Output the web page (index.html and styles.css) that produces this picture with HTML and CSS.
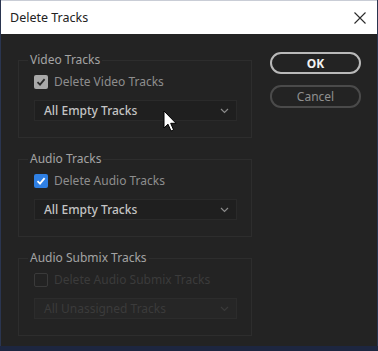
FILE: index.html
```html
<!doctype html>
<html lang="en">
  <head>
    <meta charset="UTF-8" />
    <title>Delete Tracks</title>
    <link rel="stylesheet" href="styles.css">
  </head>
  <body>
    <div class="window">
      <div class="titlebar">
        <span class="title">Delete Tracks</span>
        <svg class="close" width="12" height="12" viewBox="0 0 12 12">
          <path d="M0.5 0.5 L11.5 11.5 M11.5 0.5 L0.5 11.5" stroke="#2b2b2b" stroke-width="1.1" />
        </svg>
      </div>
      <div class="content">
        <div class="groups">
          <fieldset class="group">
            <legend>Video Tracks</legend>
            <label class="check-row">
              <span class="box box-gray">
                <svg width="10" height="10" viewBox="0 0 10 10">
                  <path d="M1.5 5.2 L4 7.6 L8.6 2.2" fill="none" stroke="#2a2a2a" stroke-width="1.8" />
                </svg>
              </span>
              Delete Video Tracks
            </label>
            <div class="select">
              <span>All Empty Tracks</span>
              <svg width="9" height="6" viewBox="0 0 9 6">
                <path d="M1 1 L4.5 4.5 L8 1" fill="none" stroke="#8a8a8a" stroke-width="1.2" />
              </svg>
            </div>
          </fieldset>

          <fieldset class="group">
            <legend>Audio Tracks</legend>
            <label class="check-row">
              <span class="box box-blue">
                <svg width="10" height="10" viewBox="0 0 10 10">
                  <path d="M1.5 5.2 L4 7.6 L8.6 2.2" fill="none" stroke="#ffffff" stroke-width="1.8" />
                </svg>
              </span>
              Delete Audio Tracks
            </label>
            <div class="select">
              <span>All Empty Tracks</span>
              <svg width="9" height="6" viewBox="0 0 9 6">
                <path d="M1 1 L4.5 4.5 L8 1" fill="none" stroke="#8a8a8a" stroke-width="1.2" />
              </svg>
            </div>
          </fieldset>

          <fieldset class="group">
            <legend>Audio Submix Tracks</legend>
            <label class="check-row disabled">
              <span class="box box-off"></span>
              Delete Audio Submix Tracks
            </label>
            <div class="select disabled">
              <span>All Unassigned Tracks</span>
              <svg width="9" height="6" viewBox="0 0 9 6">
                <path d="M1 1 L4.5 4.5 L8 1" fill="none" stroke="#3a3a3a" stroke-width="1.2" />
              </svg>
            </div>
          </fieldset>
        </div>

        <div class="buttons">
          <button class="btn btn-ok">OK</button>
          <button class="btn btn-cancel">Cancel</button>
        </div>
      </div>
    </div>

    <svg class="cursor" width="14" height="23" viewBox="0 0 14 23">
      <path d="M1 1 L1 18 L5 14.2 L8 21 L10.6 19.9 L7.7 13.3 L13 13.3 Z" fill="#ffffff" stroke="#000000" stroke-width="1" stroke-linejoin="round" />
    </svg>
  </body>
</html>
```

FILE: styles.css
```css
html,
body {
  margin: 0;
  padding: 0;
}
body {
  width: 378px;
  height: 351px;
  background-color: #1d2640;
  font-family: "Noto Sans", "Open Sans", sans-serif;
  position: relative;
  overflow: hidden;
}
.window {
  width: 376px;
  height: 346px;
  border-left: 1px solid #2a3550;
  border-right: 1px solid #2a3550;
  background-color: #232323;
  display: flex;
  flex-direction: column;
}
.titlebar {
  height: 33px;
  border-top: 1px solid #c9cdd6;
  background-color: #ffffff;
  display: flex;
  align-items: center;
  justify-content: space-between;
  padding: 0 10px 0 9px;
}
.title {
  font-size: 12.5px;
  color: #222222;
}
.close {
  margin-right: 1px;
}
.content {
  display: flex;
  padding: 18px 0 0 17px;
  gap: 18px;
}
.groups {
  width: 234px;
  display: flex;
  flex-direction: column;
  gap: 13px;
}
.group {
  margin: 0;
  border: 1px solid #2d2d2d;
  padding: 6px 14px 16px 15px;
}
.group legend {
  padding: 0 2px;
  margin-left: -6px;
  font-size: 12px;
  line-height: 16px;
  color: #a3a3a3;
}
.check-row {
  display: flex;
  align-items: center;
  height: 15px;
  gap: 6px;
  font-size: 12px;
  color: #8e8e8e;
}
.box {
  width: 14px;
  height: 14px;
  box-sizing: border-box;
  border-radius: 2px;
  display: flex;
  align-items: center;
  justify-content: center;
}
.box-gray {
  background-color: #a9a9a9;
}
.box-blue {
  background-color: #2f80e4;
}
.box-off {
  border: 1px solid #3a3a3a;
}
.check-row.disabled {
  color: #3b3b3b;
}
.select {
  margin-top: 11px;
  height: 21px;
  box-sizing: border-box;
  background-color: #1f1f1f;
  border: 1px solid #2a2a2a;
  display: flex;
  align-items: center;
  justify-content: space-between;
  padding: 0 7px 0 9px;
  font-size: 12px;
  font-weight: 500;
  color: #c4c4c4;
}
.select.disabled {
  background-color: #262626;
  border-color: #2c2c2c;
  color: #3b3b3b;
  font-weight: 400;
}
.buttons {
  display: flex;
  flex-direction: column;
  gap: 11px;
  width: 91px;
}
.btn {
  height: 22px;
  border-radius: 11px;
  background: transparent;
  font-family: "Noto Sans", "Open Sans", sans-serif;
  font-size: 12px;
  padding: 0;
}
.btn-ok {
  border: 2px solid #b9b9b9;
  color: #f2f2f2;
  font-weight: 700;
}
.btn-cancel {
  height: 23px;
  border: 2px solid #4a4a4a;
  color: #8f8f8f;
}
.cursor {
  position: absolute;
  left: 163px;
  top: 110px;
}
```
